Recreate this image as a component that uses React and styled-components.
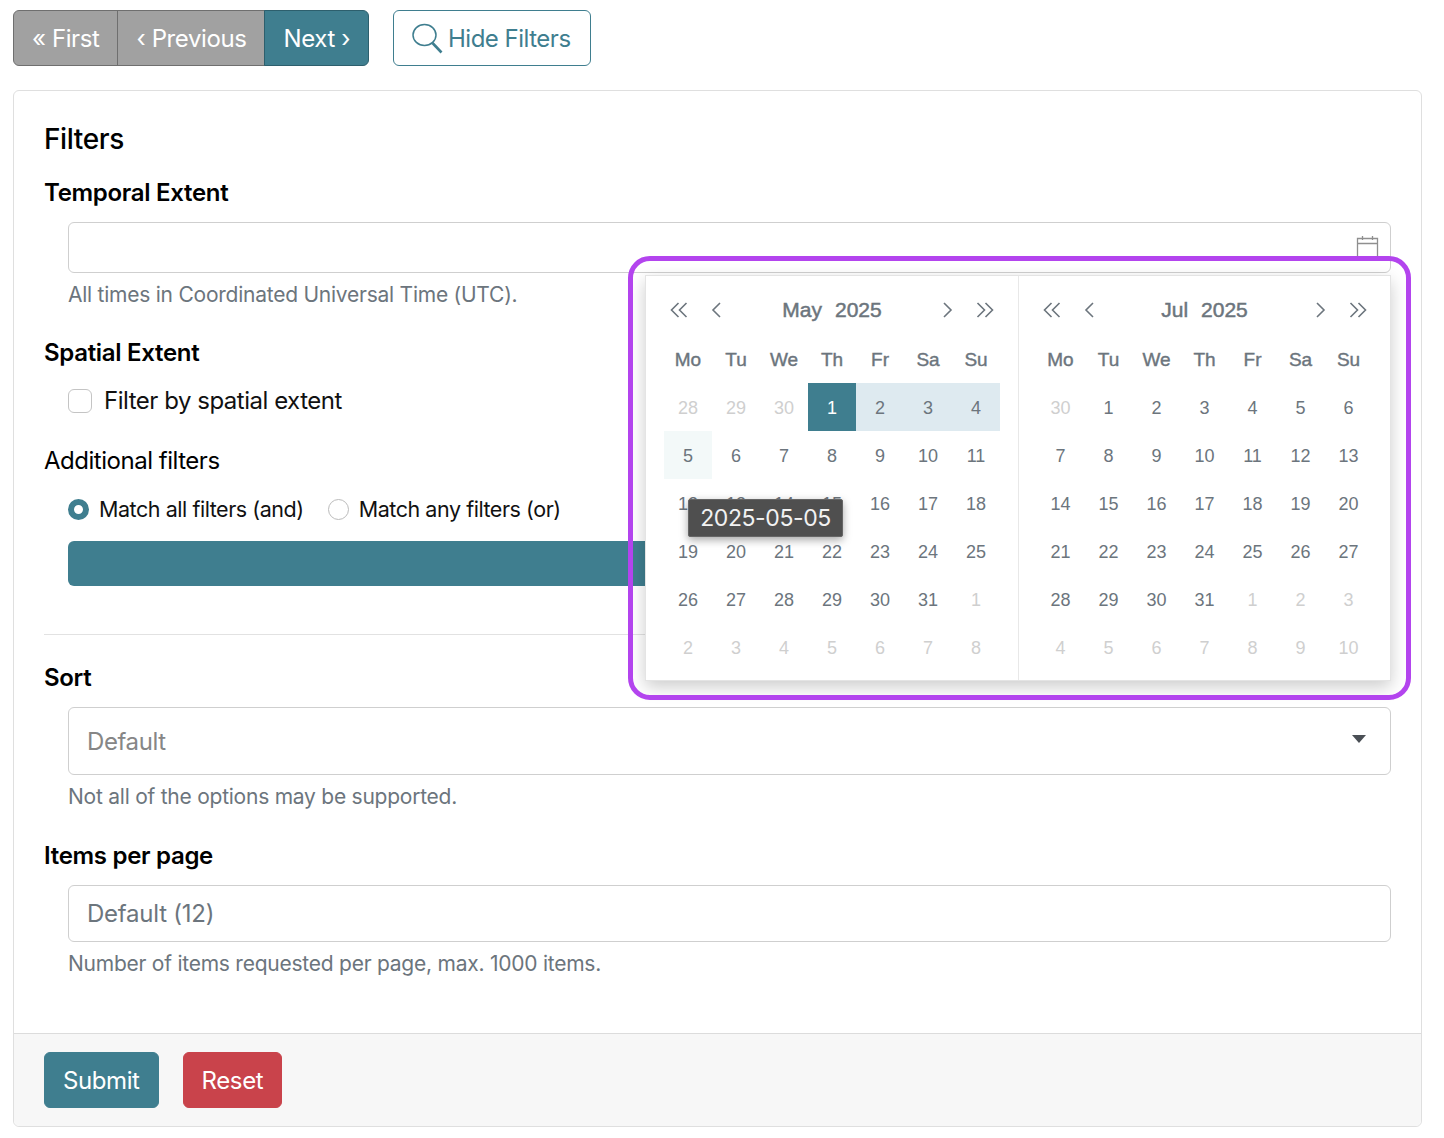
import React from 'react';
import styled, { createGlobalStyle } from 'styled-components';

const TEAL = '#3f7e8f';

const GlobalStyle = createGlobalStyle`
  html, body {
    margin: 0;
    background: #fff;
    font-family: Inter, "Liberation Sans", sans-serif;
    color: #111;
  }
  * { box-sizing: border-box; }
`;

const Page = styled.div`
  padding: 10px 22px 11px 13px;
`;
const Toolbar = styled.div`
  display: flex;
  gap: 24px;
  margin-bottom: 24px;
`;
const Pager = styled.div`
  display: flex;
`;
const PagerButton = styled.button`
  height: 56px;
  padding: 1px 18px 0;
  font: 400 24px/1 Inter, sans-serif;
  letter-spacing: -0.4px;
  color: #fff;
  background: ${p => (p.$active ? TEAL : '#a1a1a1')};
  border: 1px solid ${p => (p.$active ? '#2d5f6d' : '#6f6f6f')};
  margin-left: -1px;
  &:first-child { margin-left: 0; border-radius: 6px 0 0 6px; }
  &:last-child { border-radius: 0 6px 6px 0; }
`;
const OutlineButton = styled.button`
  display: flex;
  align-items: center;
  gap: 5px;
  height: 56px;
  padding: 1px 19px 0 18px;
  font: 400 24px/1 Inter, sans-serif;
  letter-spacing: -0.5px;
  color: ${TEAL};
  background: #fff;
  border: 1px solid ${TEAL};
  border-radius: 6px;
`;
const Card = styled.div`
  border: 1px solid #dfdfdf;
  border-radius: 6px;
  background: #fff;
`;
const CardBody = styled.div`
  padding: 30px 30px 53px;
`;
const Title = styled.h2`
  margin: 0 0 18px;
  font: 500 28px/36px Inter, sans-serif;
  letter-spacing: -0.4px;
  color: #000;
`;
const Label = styled.div`
  font: ${p => (p.$plain ? 400 : 600)} 24px/36px Inter, sans-serif;
  letter-spacing: ${p => (p.$plain ? -0.48 : -0.3)}px;
  color: #000;
  margin-top: ${p => p.$top || 0}px;
  margin-bottom: ${p => p.$bottom || 0}px;
`;
const Indent = styled.div`
  padding-left: 24px;
`;
const FieldWrap = styled.div`
  position: relative;
`;
const TextInput = styled.input`
  display: block;
  width: 100%;
  height: ${p => p.$h}px;
  padding: 0 18px;
  font: 400 24px Inter, sans-serif;
  letter-spacing: -0.25px;
  color: #333;
  border: 1px solid #cfcfcf;
  border-radius: 6px;
  background: #fff;
  outline: none;
  &::placeholder { color: #6c757d; opacity: 1; }
`;
const CalendarIcon = styled.svg`
  position: absolute;
  top: 13px;
  right: 12px;
`;
const Help = styled.div`
  margin-top: 6px;
  font: 400 21px/32px Inter, sans-serif;
  letter-spacing: -0.24px;
  color: #6c757d;
`;
const CheckRow = styled.label`
  display: flex;
  align-items: center;
  gap: 12px;
  height: 32px;
  margin-top: 14px;
  font: 400 24px/32px Inter, sans-serif;
  letter-spacing: -0.48px;
  color: #111;
`;
const CheckBox = styled.span`
  width: 24px;
  height: 24px;
  border: 1px solid #c4c4c4;
  border-radius: 6px;
  background: #fff;
`;
const RadioRow = styled.div`
  display: flex;
  align-items: center;
  gap: 24px;
  height: 32px;
  margin-top: 14px;
`;
const RadioLabel = styled.label`
  display: flex;
  align-items: center;
  gap: 10px;
  font: 400 21.5px/32px Inter, sans-serif;
  letter-spacing: -0.45px;
  color: #111;
`;
const RadioDot = styled.span`
  width: 21px;
  height: 21px;
  border-radius: 50%;
  background: #fff;
  border: ${p => (p.$on ? `6px solid ${TEAL}` : '1px solid #bbb')};
`;
const AddBar = styled.div`
  height: 45px;
  margin-top: 16px;
  background: ${TEAL};
  border-radius: 6px;
`;
const Rule = styled.hr`
  margin: 48px 0 25px;
  border: 0;
  border-top: 1px solid #e2e2e2;
`;
const SelectWrap = styled.div`
  position: relative;
  &::after {
    content: '';
    position: absolute;
    top: 28px;
    right: 25px;
    border-left: 7.5px solid transparent;
    border-right: 7.5px solid transparent;
    border-top: 8px solid #4a4f55;
  }
`;
const SelectBox = styled.select`
  display: block;
  width: 100%;
  height: 68px;
  padding: 0 18px;
  font: 400 24px Inter, sans-serif;
  letter-spacing: -0.4px;
  color: #868686;
  appearance: none;
  border: 1px solid #cfcfcf;
  border-radius: 6px;
  background: #fff;
`;
const Footer = styled.div`
  display: flex;
  gap: 24px;
  padding: 18px 30px;
  height: 93px;
  background: #f7f7f7;
  border-top: 1px solid #dcdcdc;
  border-radius: 0 0 6px 6px;
`;
const SolidButton = styled.button`
  height: 56px;
  padding: 1px 18px 0;
  font: 400 24px/1 Inter, sans-serif;
  letter-spacing: -0.4px;
  color: #fff;
  background: ${p => p.$bg};
  border: 1px solid ${p => p.$bg};
  border-radius: 6px;
`;

/* date picker popup */
const Popup = styled.div`
  position: absolute;
  top: 53px;
  right: 0;
  z-index: 5;
  display: flex;
  background: #fff;
  border: 1px solid #e4e4e4;
  box-shadow: 0 6px 16px rgba(0, 0, 0, 0.2);
  font-family: "Liberation Sans", Arial, sans-serif;
`;
const Highlight = styled.div`
  position: absolute;
  top: -20px;
  left: -18px;
  right: -21px;
  bottom: -20px;
  border: 5px solid #b344ee;
  border-radius: 22px;
  pointer-events: none;
`;
const Panel = styled.div`
  position: relative;
  padding: 9px 18px;
  & + & {
    border-left: 1px solid #e8e8e8;
    padding-left: 17.5px;
    padding-right: 17.5px;
  }
`;
const PanelHeader = styled.div`
  display: flex;
  align-items: center;
  height: 50px;
  gap: 8px;
`;
const NavButton = styled.span`
  display: flex;
  align-items: center;
  justify-content: center;
  width: 30px;
  height: 30px;
  color: #6c757d;
`;
const MonthTitle = styled.div`
  flex: 1;
  display: flex;
  justify-content: center;
  gap: 13px;
  font-size: 21px;
  color: #6c757d;
  -webkit-text-stroke: 0.5px #6c757d;
`;
const Grid = styled.div`
  display: grid;
  grid-template-columns: repeat(7, 48px);
  grid-auto-rows: 48px;
`;
const WeekDay = styled.div`
  display: flex;
  align-items: center;
  justify-content: center;
  padding-top: 2px;
  font-size: 19px;
  color: #6c757d;
  -webkit-text-stroke: 0.4px #6c757d;
`;
const tones = {
  start: ['#3f7e8f', '#fff'],
  range: ['#deeaf0', '#6c757d'],
  hover: ['#f3f9f9', '#6c757d'],
};
const Day = styled.div`
  display: flex;
  align-items: center;
  justify-content: center;
  padding-top: 2px;
  font-size: 18px;
  color: ${p => (p.$tone ? tones[p.$tone][1] : p.$muted ? '#cfcfcf' : '#6c757d')};
  background: ${p => (p.$tone ? tones[p.$tone][0] : 'transparent')};
`;
const Tooltip = styled.div`
  position: absolute;
  left: 42px;
  top: 223px;
  width: 155px;
  height: 38px;
  display: flex;
  align-items: center;
  justify-content: center;
  font: 400 23px/1 Inter, sans-serif;
  letter-spacing: -0.4px;
  color: #f2f2f2;
  background: #4f4f4f;
  border: 1px solid #666;
  border-radius: 2px;
  box-shadow: 0 3px 8px rgba(0, 0, 0, 0.35);
`;

const weekDays = ['Mo', 'Tu', 'We', 'Th', 'Fr', 'Sa', 'Su'];

// six rows of 7 days, starting from the last days of the month before
function buildDays(prevLen, prevFrom, monthLen) {
  const days = [];
  for (let d = prevFrom; d <= prevLen; d++) days.push({ n: d, muted: true });
  for (let d = 1; d <= monthLen; d++) days.push({ n: d });
  let next = 1;
  while (days.length < 42) days.push({ n: next++, muted: true });
  return days;
}

const Chevron = ({ double, right }) => (
  <svg width="22" height="18" viewBox="0 0 22 18" fill="none" stroke="currentColor" strokeWidth="1.6"
    style={right ? { transform: 'scaleX(-1)' } : undefined}>
    {double ? (
      <>
        <path d="M10.5 2 3.5 9l7 7" />
        <path d="M18.5 2 11.5 9l7 7" />
      </>
    ) : (
      <path d="M14 2 7 9l7 7" />
    )}
  </svg>
);

const Calendar = ({ month, year, days, tones: dayTones = {}, children }) => (
  <Panel>
    <PanelHeader>
      <NavButton><Chevron double /></NavButton>
      <NavButton><Chevron /></NavButton>
      <MonthTitle><span>{month}</span><span>{year}</span></MonthTitle>
      <NavButton><Chevron right /></NavButton>
      <NavButton><Chevron double right /></NavButton>
    </PanelHeader>
    <Grid>
      {weekDays.map(w => <WeekDay key={w}>{w}</WeekDay>)}
      {days.map((d, i) => (
        <Day key={i} $muted={d.muted} $tone={d.muted ? undefined : dayTones[d.n]}>{d.n}</Day>
      ))}
    </Grid>
    {children}
  </Panel>
);

export default function App() {
  return (
    <Page>
      <GlobalStyle />
      <Toolbar>
        <Pager>
          <PagerButton>« First</PagerButton>
          <PagerButton>‹ Previous</PagerButton>
          <PagerButton $active>Next ›</PagerButton>
        </Pager>
        <OutlineButton>
          <svg width="31" height="31" viewBox="0 0 31 31" fill="none" stroke={TEAL}>
            <ellipse cx="12.5" cy="12" rx="11.5" ry="10.5" strokeWidth="1.5" />
            <path d="M20.5 20 29.5 29.5" strokeWidth="2.6" />
          </svg>
          Hide Filters
        </OutlineButton>
      </Toolbar>

      <Card>
        <CardBody>
          <Title>Filters</Title>
          <Label $bottom={11}>Temporal Extent</Label>
          <Indent>
            <FieldWrap>
              <TextInput $h={51} />
              <CalendarIcon width="23" height="24" viewBox="0 0 23 24" fill="none" stroke="#8f8f8f">
                <path d="M1.5 3.5h20v20h-20zM1.5 8.5h20M6.5 1v4M16.5 1v4" strokeWidth="1.3" />
              </CalendarIcon>
              <Popup>
                <Calendar
                  month="May"
                  year="2025"
                  days={buildDays(30, 28, 31)}
                  tones={{ 1: 'start', 2: 'range', 3: 'range', 4: 'range', 5: 'hover' }}
                >
                  <Tooltip>2025-05-05</Tooltip>
                </Calendar>
                <Calendar month="Jul" year="2025" days={buildDays(30, 30, 31)} />
                <Highlight />
              </Popup>
            </FieldWrap>
            <Help>All times in Coordinated Universal Time (UTC).</Help>
          </Indent>

          <Label $top={24}>Spatial Extent</Label>
          <Indent>
            <CheckRow><CheckBox />Filter by spatial extent</CheckRow>
          </Indent>

          <Label $plain $top={26}>Additional filters</Label>
          <Indent>
            <RadioRow>
              <RadioLabel><RadioDot $on />Match all filters (and)</RadioLabel>
              <RadioLabel><RadioDot />Match any filters (or)</RadioLabel>
            </RadioRow>
            <AddBar />
          </Indent>

          <Rule />

          <Label $bottom={11}>Sort</Label>
          <Indent>
            <SelectWrap>
              <SelectBox defaultValue="default">
                <option value="default">Default</option>
              </SelectBox>
            </SelectWrap>
            <Help>Not all of the options may be supported.</Help>
          </Indent>

          <Label $top={25} $bottom={11}>Items per page</Label>
          <Indent>
            <TextInput $h={57} placeholder="Default (12)" />
            <Help>Number of items requested per page, max. 1000 items.</Help>
          </Indent>
        </CardBody>
        <Footer>
          <SolidButton $bg={TEAL}>Submit</SolidButton>
          <SolidButton $bg="#c9434b">Reset</SolidButton>
        </Footer>
      </Card>
    </Page>
  );
}
